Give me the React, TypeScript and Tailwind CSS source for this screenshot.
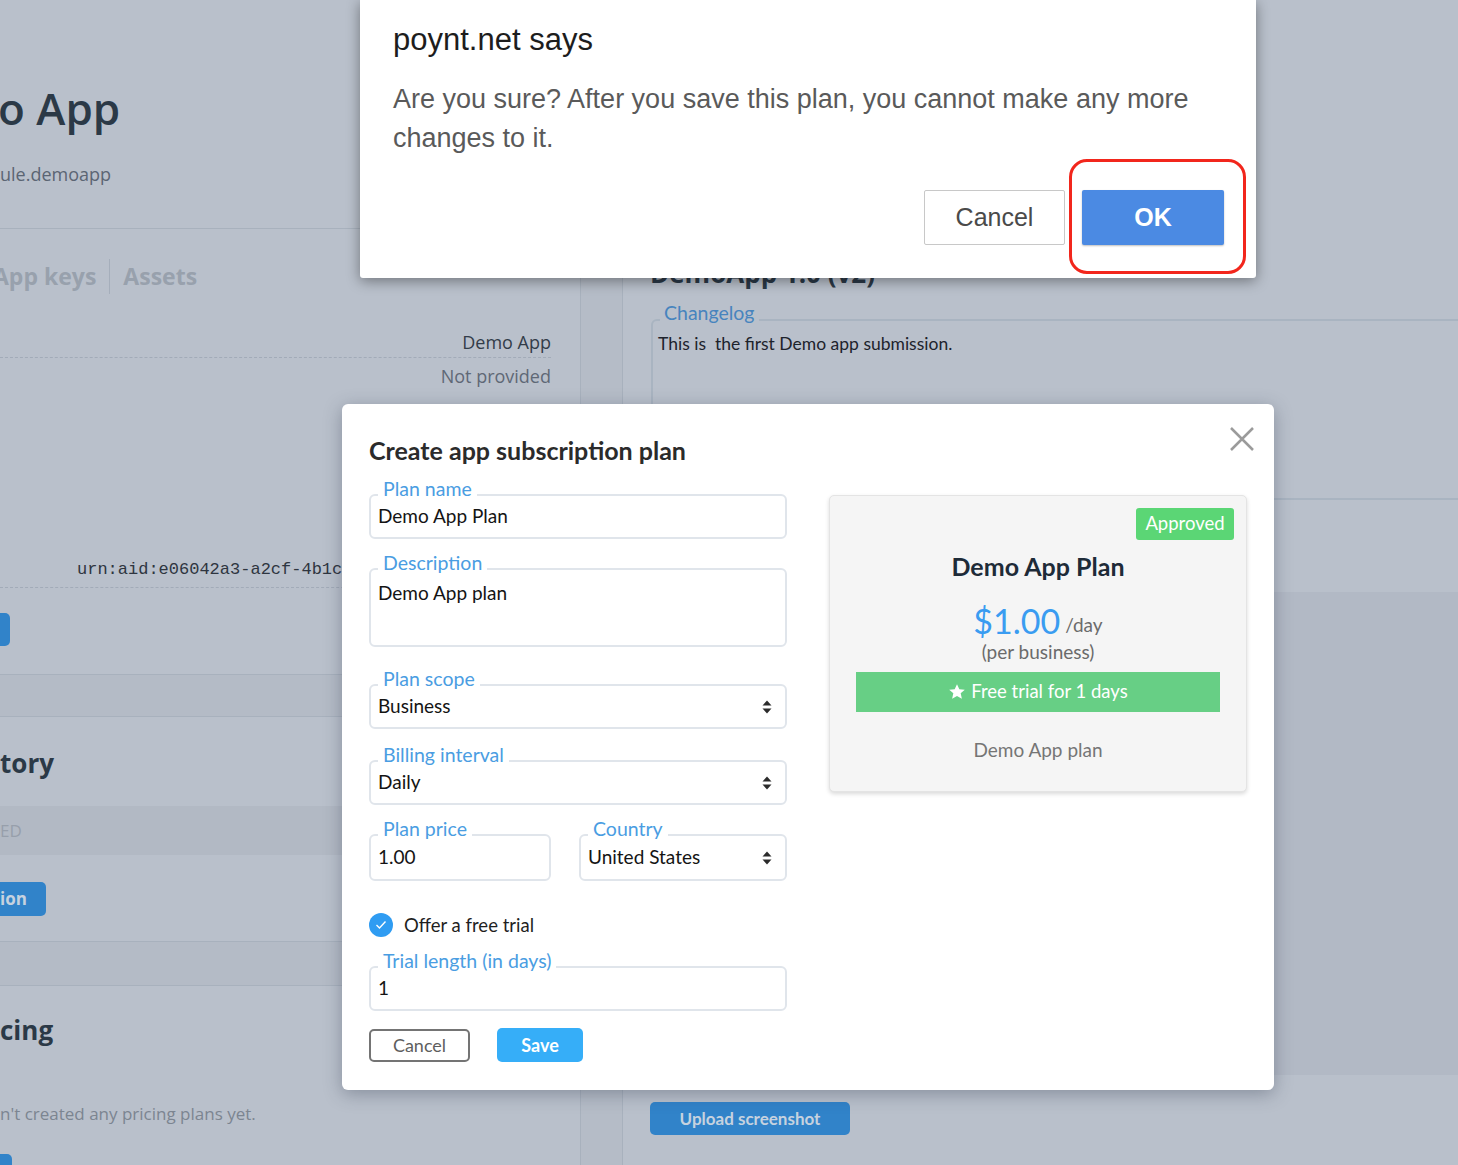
import React from 'react';

const bgFont = { fontFamily: '"Open Sans", "Noto Sans", sans-serif' };
const formFont = { fontFamily: 'Lato, "Open Sans", sans-serif' };
const alertFont = { fontFamily: '"Liberation Sans", Arial, sans-serif' };

const SelectArrows: React.FC = () => (
  <svg width="10" height="16" viewBox="0 0 10 16" className="shrink-0">
    <path d="M5 1.5 L9.5 6.5 H0.5 Z" fill="#2b2b2b" />
    <path d="M0.5 9.5 H9.5 L5 14.5 Z" fill="#2b2b2b" />
  </svg>
);

const Field: React.FC<{ label: string; h?: string; className?: string; children: React.ReactNode }> = ({
  label,
  h = 'h-[45px]',
  className = '',
  children,
}) => (
  <div className={`flex flex-col ${className}`}>
    <div className="relative z-10 -mb-[6px] ml-[9px] w-fit bg-white px-[5px] text-[19.5px] leading-[22px] text-[#4a9de2]">
      {label}
    </div>
    <div className={`${h} shrink-0 rounded-[6px] border-2 border-[#e0e5eb] px-[7px] text-[19px] text-[#141414]`}>
      {children}
    </div>
  </div>
);

const BackgroundPage: React.FC = () => (
  <div className="flex h-full w-full" style={bgFont}>
    {/* left column */}
    <div className="w-[580px] shrink-0">
      <div className="h-[229px] border-b border-[#a8b1bd]">
        <div className="-ml-[2px] pt-[82px] text-[44px] font-semibold leading-[52px] text-[#2b3947]">o App</div>
        <div className="mt-[28px] text-[18px] leading-[24px] text-[#5b6573]">ule.demoapp</div>
      </div>

      <div className="mt-[29px] flex h-[36px] items-center text-[23px] font-bold text-[#98a1ad]">
        <span className="-ml-[7px]">App keys</span>
        <div className="mx-[13px] h-[35px] border-l border-[#a5aebb]" />
        <span>Assets</span>
      </div>

      <div className="mt-[33px] pr-[29px] text-[18px]">
        <div className="flex h-[31px] items-center justify-end border-b border-dashed border-[#a2abb8] text-[#323c49]">
          Demo App
        </div>
        <div className="flex h-[36px] items-center justify-end text-[#5f6876]">Not provided</div>
      </div>

      <div className="h-[158px]" />
      <div
        className="flex h-[36px] items-center whitespace-nowrap border-b border-dashed border-[#a2abb8] pl-[77px] text-[17px] text-[#2e3540]"
        style={{ fontFamily: '"Liberation Mono", monospace' }}
      >
        urn:aid:e06042a3-a2cf-4b1c-9a2e-5d0f1c7b8e21
      </div>
      <div className="mt-[25px] h-[33px] w-[10px] rounded-r-[5px] bg-[#3183c9]" />

      <div className="mt-[28px] h-[43px] border-y border-[#a8b1bd] bg-[#b4bbc6]" />
      <div className="mt-[30px] text-[26px] font-bold leading-[32px] text-[#2b3947]">tory</div>
      <div className="mt-[27px] flex h-[49px] items-center bg-[#b2b9c4] text-[17px] text-[#979fab]">ED</div>
      <div className="mt-[27px] flex h-[34px] w-[46px] items-center rounded-r-[5px] bg-[#3183c9] text-[17px] font-bold text-[#c6d2df]">
        ion
      </div>
      <div className="mt-[25px] h-[45px] border-y border-[#a8b1bd] bg-[#b4bbc6]" />
      <div className="mt-[28px] text-[26px] font-bold leading-[32px] text-[#2b3947]">cing</div>
      <div className="mt-[56px] text-[17px] leading-[24px] text-[#7c8591]">n't created any pricing plans yet.</div>
      <div className="mt-[28px] h-[33px] w-[12px] rounded-r-[5px] bg-[#3183c9]" />
    </div>

    {/* gutter */}
    <div className="w-[43px] shrink-0 border-x border-[#a8b1bd] bg-[#b5bcc7]" />

    {/* right column */}
    <div className="min-w-0 flex-1">
      <div className="mt-[256px] whitespace-nowrap pl-[27px] text-[26px] font-bold leading-[34px] text-[#2b3947]">
        DemoApp 1.0 (v2)
      </div>
      <div className="-mr-[40px] ml-[28px] mt-[11px] flex flex-col" style={formFont}>
        <div className="relative z-10 -mb-[6px] ml-[9px] w-fit bg-[#b9c0cb] px-[4px] text-[19.5px] leading-[24px] text-[#4784be]">
          Changelog
        </div>
        <div className="h-[181px] shrink-0 rounded-tl-[6px] border-2 border-[#a9b4c1] px-[5px] pt-[10px] text-[17.5px] text-[#1d232c]">
          This is&nbsp; the first Demo app submission.
        </div>
      </div>
      <div className="ml-[28px] mt-[92px] h-[483px] bg-[#b2b9c5]" />
      <div
        className="ml-[27px] mt-[27px] flex h-[33px] w-[200px] items-center justify-center rounded-[5px] bg-[#3183c9] text-[17px] font-bold text-[#c6d2df]"
        style={formFont}
      >
        Upload screenshot
      </div>
    </div>
  </div>
);

const PlanModal: React.FC = () => (
  <div
    className="absolute left-[342px] top-[404px] w-[932px] rounded-[6px] bg-white px-[27px] pb-[28px] pt-[31px] shadow-[0_4px_18px_rgba(40,50,70,0.35)]"
    style={formFont}
  >
    <button className="absolute right-[20px] top-[23px]">
      <svg width="24" height="24" viewBox="0 0 24 24">
        <path d="M1 1 L23 23 M23 1 L1 23" stroke="#9b9b9b" strokeWidth="2.5" />
      </svg>
    </button>
    <h2 className="text-[25px] font-bold leading-[30px] text-[#2b2b2b]">Create app subscription plan</h2>

    <div className="mt-[13px] flex items-start gap-[42px]">
      {/* form */}
      <div className="flex w-[418px] flex-col">
        <Field label="Plan name">
          <div className="flex h-full items-center">Demo App Plan</div>
        </Field>
        <Field label="Description" h="h-[79px]" className="mt-[13px]">
          <div className="pt-[12px] leading-[22px]">Demo App plan</div>
        </Field>
        <Field label="Plan scope" className="mt-[21px]">
          <div className="flex h-full items-center justify-between pr-[6px]">
            <span>Business</span>
            <SelectArrows />
          </div>
        </Field>
        <Field label="Billing interval" className="mt-[15px]">
          <div className="flex h-full items-center justify-between pr-[6px]">
            <span>Daily</span>
            <SelectArrows />
          </div>
        </Field>
        <div className="mt-[13px] flex gap-[28px]">
          <Field label="Plan price" h="h-[47px]" className="w-[182px]">
            <div className="flex h-full items-center">1.00</div>
          </Field>
          <Field label="Country" h="h-[47px]" className="flex-1">
            <div className="flex h-full items-center justify-between pr-[6px]">
              <span>United States</span>
              <SelectArrows />
            </div>
          </Field>
        </div>

        <div className="mt-[32px] flex h-[24px] items-center gap-[11px]">
          <div className="flex h-[24px] w-[24px] items-center justify-center rounded-full bg-[#2f9cf2]">
            <svg width="12" height="10" viewBox="0 0 12 10">
              <path d="M1.5 5 L4.5 8 L10.5 1.5" fill="none" stroke="white" strokeWidth="1.4" />
            </svg>
          </div>
          <span className="text-[18.5px] leading-[24px] text-[#1f1f1f]">Offer a free trial</span>
        </div>

        <Field label="Trial length (in days)" className="mt-[13px]">
          <div className="flex h-full items-center">1</div>
        </Field>

        <div className="mt-[17px] flex items-center gap-[27px]">
          <button className="h-[33px] w-[101px] rounded-[5px] border-2 border-[#747474] text-[18px] text-[#5e5e5e]">
            Cancel
          </button>
          <button className="h-[34px] w-[86px] rounded-[5px] bg-[#36aef8] text-[18px] font-bold text-white">Save</button>
        </div>
      </div>

      {/* preview card */}
      <div className="relative mt-[17px] h-[297px] w-[418px] rounded-[5px] border border-[#e4e4e4] bg-[#f5f5f5] px-[26px] pt-[55px] text-center shadow-[0_2px_4px_rgba(0,0,0,0.15)]">
        <div className="absolute right-[12px] top-[12px] flex h-[32px] w-[98px] items-center justify-center rounded-[3px] bg-[#5bd675] text-[18.5px] text-white">
          Approved
        </div>
        <div className="text-[25px] font-bold leading-[30px] text-[#1e2b38]">Demo App Plan</div>
        <div className="mt-[20px] flex h-[40px] items-end justify-center gap-[5px]">
          <span className="text-[34px] leading-[40px] text-[#3a9cf1]">$1.00</span>
          <span className="pb-[4px] text-[19px] leading-[24px] text-[#6b6b6b]">/day</span>
        </div>
        <div className="text-[19px] leading-[22px] text-[#6b6b6b]">(per business)</div>
        <div className="mt-[9px] flex h-[40px] items-center justify-center gap-[5px] bg-[#67cf85] text-[18.5px] text-white">
          <svg width="18" height="18" viewBox="0 0 24 24">
            <path
              d="M12 1.5 L15.1 8.2 L22.4 8.9 L16.9 13.8 L18.5 21 L12 17.3 L5.5 21 L7.1 13.8 L1.6 8.9 L8.9 8.2 Z"
              fill="white"
            />
          </svg>
          <span>Free trial for 1 days</span>
        </div>
        <div className="mt-[27px] text-[19px] leading-[22px] text-[#757575]">Demo App plan</div>
      </div>
    </div>
  </div>
);

const ConfirmAlert: React.FC = () => (
  <>
    <div
      className="absolute left-[360px] top-0 h-[278px] w-[896px] rounded-b-[3px] bg-white pl-[33px] pr-[32px] pt-[22px] shadow-[0_3px_14px_rgba(0,0,0,0.4)]"
      style={alertFont}
    >
      <div className="text-[31px] leading-[36px] text-[#1d1d1d]">poynt.net says</div>
      <div className="mt-[22px] text-[27px] leading-[39px] text-[#5a5a5a]">
        Are you sure? After you save this plan, you cannot make any more changes to it.
      </div>
      <div className="mt-[32px] flex justify-end gap-[17px]">
        <button className="h-[55px] w-[141px] rounded-[2px] border border-[#c8c8c8] bg-white text-[25px] text-[#4a4a4a]">
          Cancel
        </button>
        <button className="h-[55px] w-[142px] rounded-[2px] bg-[#4b8ae3] text-[25px] font-bold text-white shadow-[0_1px_2px_rgba(0,0,0,0.25)]">
          OK
        </button>
      </div>
    </div>
    <div className="absolute left-[1069px] top-[159px] h-[115px] w-[177px] rounded-[18px] border-[3px] border-[#f2261c]" />
  </>
);

export default function App() {
  return (
    <div className="relative h-[1165px] w-[1458px] overflow-hidden bg-[#b9c0cb]">
      <BackgroundPage />
      <PlanModal />
      <ConfirmAlert />
    </div>
  );
}
